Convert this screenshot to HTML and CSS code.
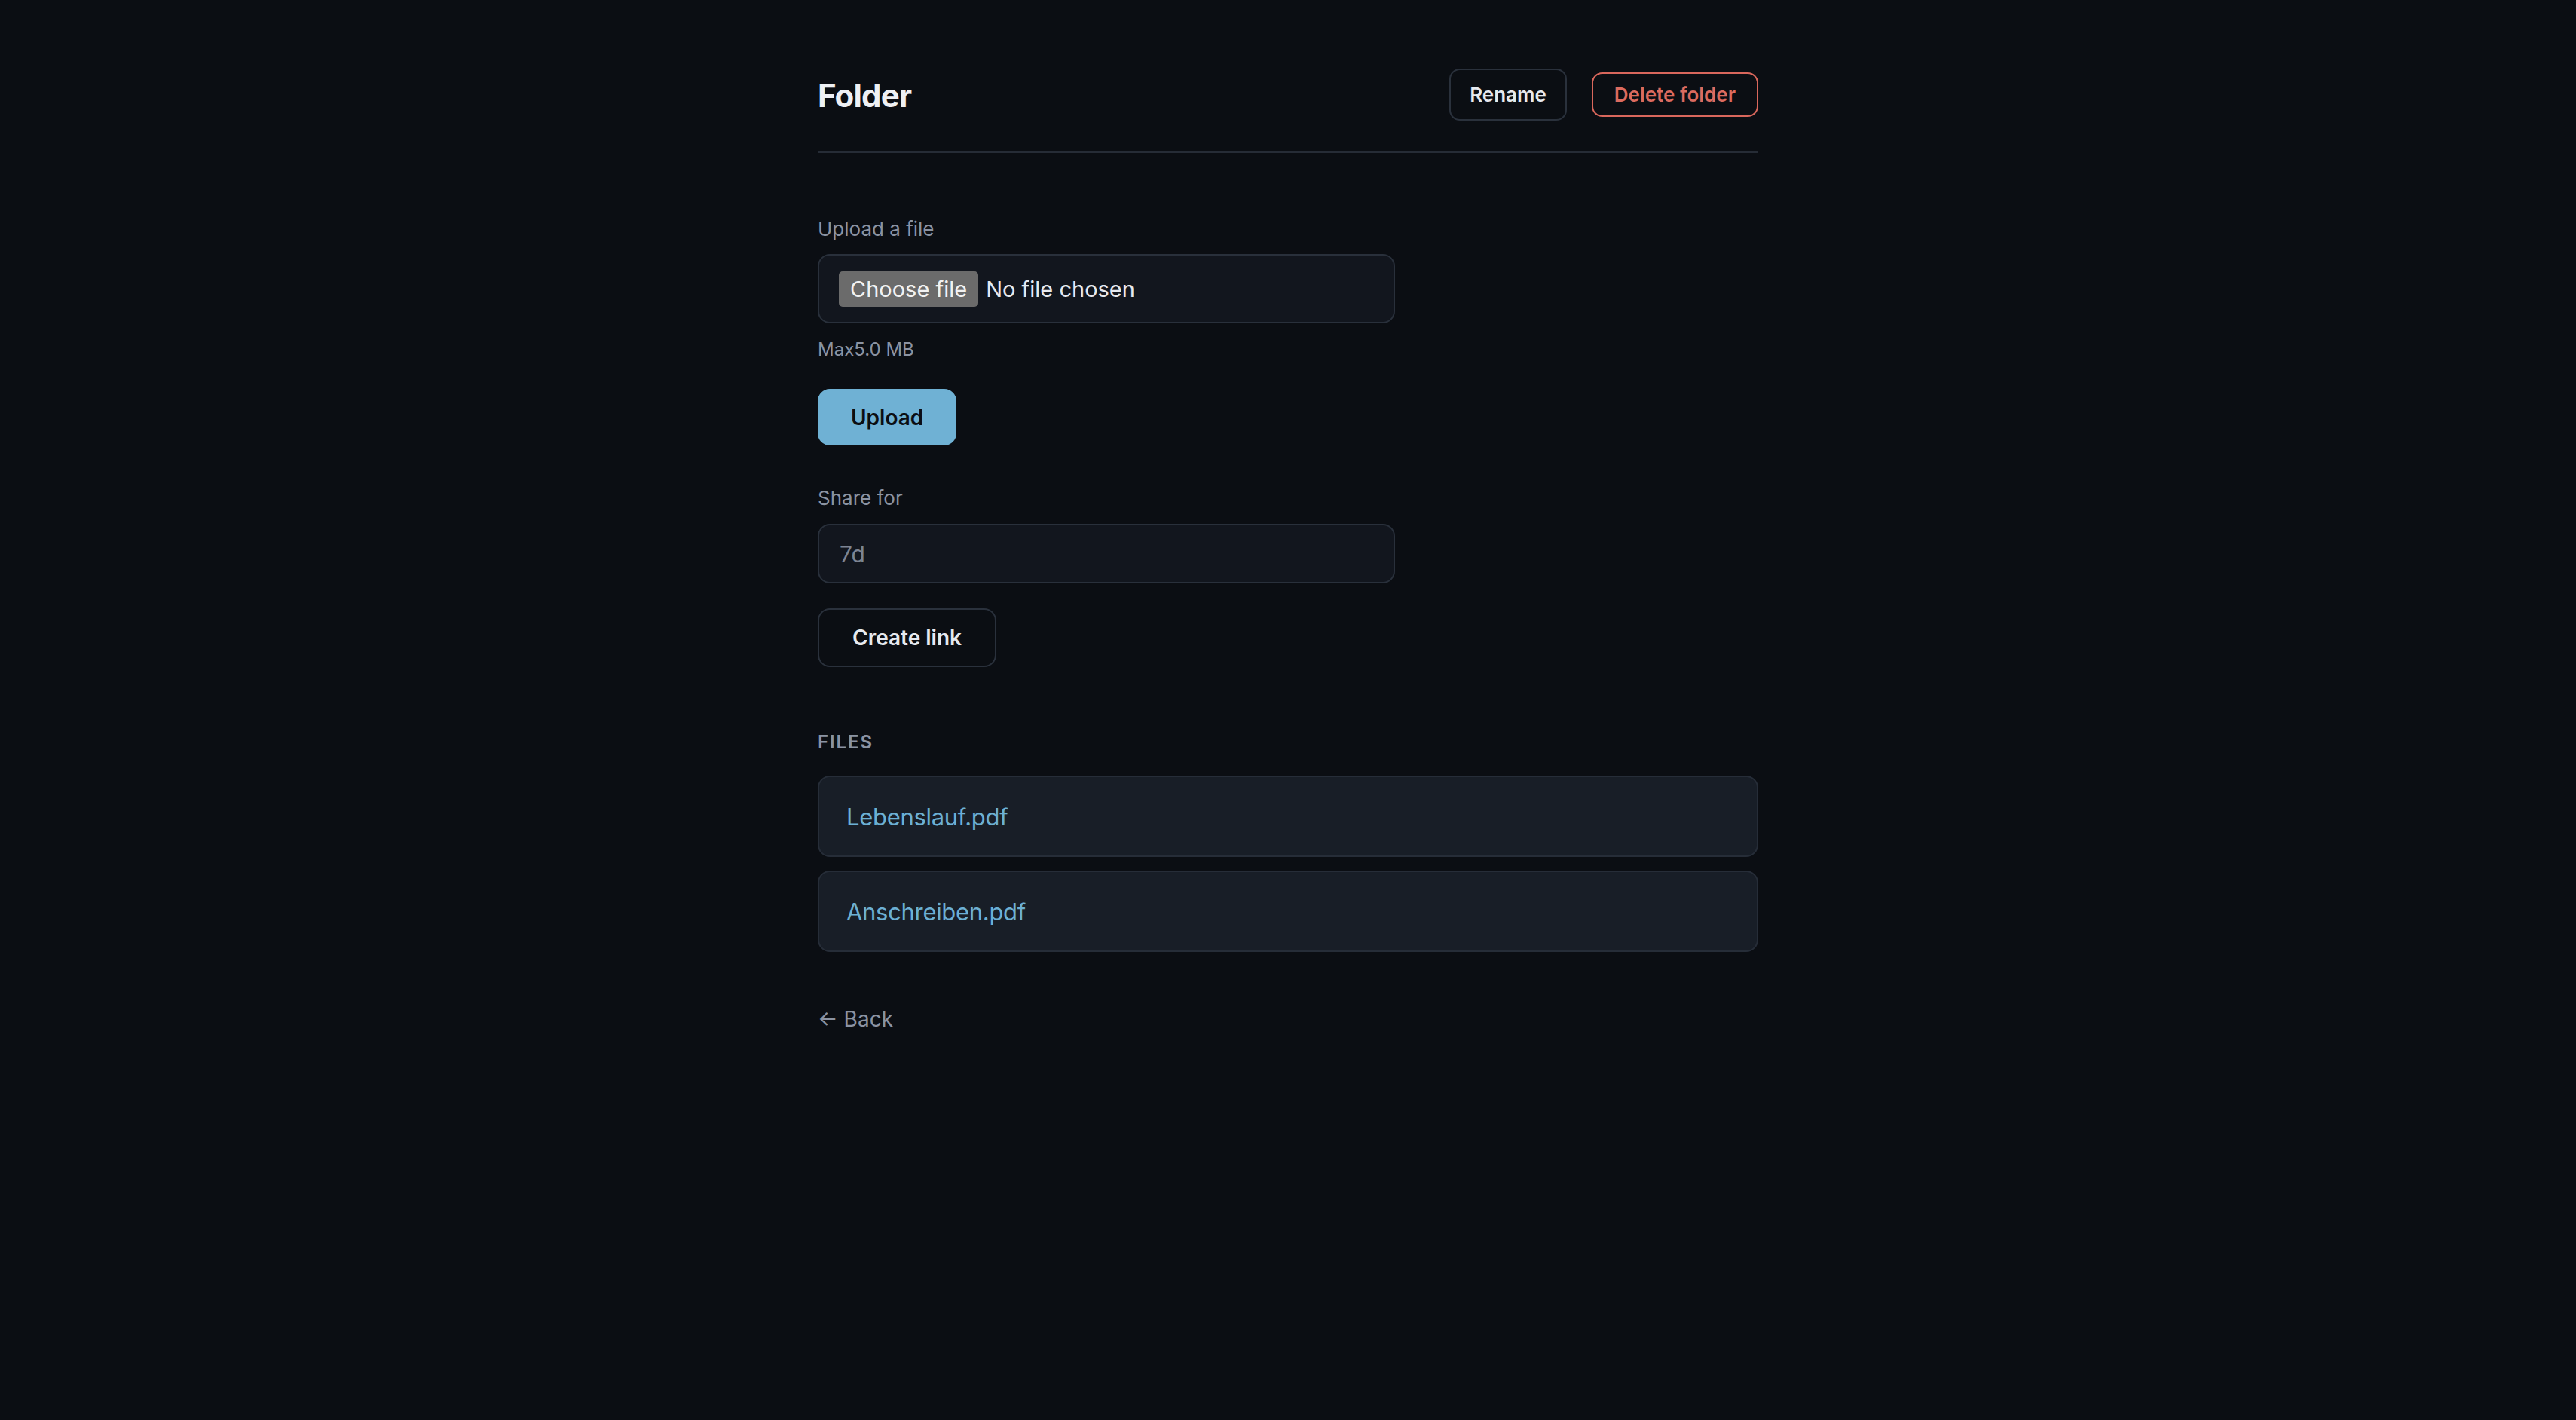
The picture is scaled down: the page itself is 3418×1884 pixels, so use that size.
FILE: index.html
```html
<!DOCTYPE html>
<html lang="en">
<head>
<meta charset="utf-8">
<title>Folder</title>
<link rel="stylesheet" href="styles.css">
</head>
<body>
<main class="page">
  <header class="head">
    <h1 class="title">Folder</h1>
    <div class="actions">
      <button class="btn btn-outline btn-rename" type="button">Rename</button>
      <button class="btn btn-danger" type="button">Delete folder</button>
    </div>
  </header>

  <form class="upload-form">
    <label class="label label-upload" for="file">Upload a file</label>
    <div class="file-field">
      <label class="file-btn" for="file">Choose file</label>
      <span class="file-name">No file chosen</span>
      <input class="file-hidden" id="file" type="file">
    </div>
    <p class="hint">Max5.0 MB</p>
    <button class="btn btn-primary" type="button">Upload</button>
  </form>

  <form class="share-form">
    <label class="label" for="share">Share for</label>
    <input class="text-input" id="share" type="text" placeholder="7d">
    <button class="btn btn-outline btn-create" type="button">Create link</button>
  </form>

  <section class="files">
    <h2 class="section-title">FILES</h2>
    <ul class="file-list">
      <li class="file-row"><a class="file-link" href="#">Lebenslauf.pdf</a></li>
      <li class="file-row"><a class="file-link" href="#">Anschreiben.pdf</a></li>
    </ul>
  </section>

  <a class="back" href="#">← Back</a>
</main>
</body>
</html>
```
FILE: styles.css
```css
* { box-sizing: border-box; }

html, body {
  margin: 0;
  padding: 0;
  background: #0b0e13;
  color: #e6e9ef;
  font-family: Inter, "Noto Sans", "Liberation Sans", sans-serif;
}

.page {
  width: 1248px;
  margin: 0 auto;
  display: flex;
  flex-direction: column;
  align-items: flex-start;
}

.head {
  align-self: stretch;
  display: flex;
  justify-content: space-between;
  align-items: center;
  padding: 91px 0 41px;
  border-bottom: 2px solid #262c36;
}

.title {
  margin: 3px 0 0;
  font-size: 42px;
  line-height: 50px;
  font-weight: 700;
  letter-spacing: -0.02em;
  color: #eef0f4;
}

.actions {
  display: flex;
  align-items: center;
  gap: 33px;
}

.btn {
  font-family: inherit;
  font-weight: 600;
  cursor: pointer;
  display: inline-flex;
  align-items: center;
  justify-content: center;
  border-radius: 14px;
  background: transparent;
}

.btn-rename {
  height: 69px;
  padding: 0 25px;
  font-size: 26px;
  border: 2px solid #2a313c;
  color: #e6e9ef;
}

.btn-danger {
  height: 59px;
  padding: 0 28px;
  font-size: 26px;
  border: 2px solid #d9675c;
  color: #dc6b5f;
  border-radius: 14px;
}

.upload-form,
.share-form {
  display: flex;
  flex-direction: column;
  align-items: flex-start;
  margin: 0;
}

.label {
  display: block;
  font-size: 26px;
  line-height: 39px;
  color: #8b93a2;
  margin-bottom: 14px;
}

.label-upload { margin-top: 81px; }

.file-field {
  width: 766px;
  height: 92px;
  display: flex;
  align-items: center;
  gap: 10px;
  padding: 21px 26px 20px;
  border: 2px solid #29303b;
  border-radius: 16px;
  background: #12161e;
  font-size: 29px;
  color: #e6e9ef;
}

.file-btn {
  height: 47px;
  line-height: 47px;
  padding: 0 15px;
  border-radius: 5px;
  background: #6b6b6b;
  color: #f2f2f2;
  cursor: pointer;
}

.file-name { line-height: 47px; }

.file-hidden { display: none; }

.hint {
  margin: 17px 0 0;
  font-size: 24px;
  line-height: 36px;
  color: #8b93a2;
}

.btn-primary {
  margin-top: 34px;
  height: 75px;
  padding: 0 44px;
  border: none;
  border-radius: 16px;
  background: #6fb1d4;
  color: #0b0e13;
  font-size: 28px;
}

.share-form { margin-top: 50px; }

.share-form .label { margin-bottom: 15px; }

.text-input {
  width: 766px;
  height: 79px;
  padding: 0 27px;
  border: 2px solid #29303b;
  border-radius: 16px;
  background: #12161e;
  color: #e6e9ef;
  font-family: inherit;
  font-size: 30px;
  outline: none;
}

.text-input::placeholder { color: #7c8493; }

.btn-create {
  margin-top: 33px;
  height: 78px;
  padding: 0 44px;
  border: 2px solid #2a313c;
  border-radius: 16px;
  color: #e6e9ef;
  font-size: 28px;
}

.files {
  align-self: stretch;
  margin-top: 82px;
}

.section-title {
  margin: 0 0 26px;
  font-size: 24px;
  line-height: 36px;
  font-weight: 600;
  letter-spacing: 0.08em;
  color: #8b93a2;
}

.file-list {
  list-style: none;
  margin: 0;
  padding: 0;
  display: flex;
  flex-direction: column;
  gap: 18px;
}

.file-row {
  height: 108px;
  display: flex;
  align-items: center;
  padding: 0 36px;
  border: 2px solid #262d38;
  border-radius: 16px;
  background: #181e27;
}

.file-link {
  font-size: 31px;
  letter-spacing: -0.01em;
  color: #6cb0d4;
  text-decoration: none;
}

.back {
  margin-top: 68px;
  font-size: 28px;
  line-height: 42px;
  color: #8b93a2;
  text-decoration: none;
}
```
